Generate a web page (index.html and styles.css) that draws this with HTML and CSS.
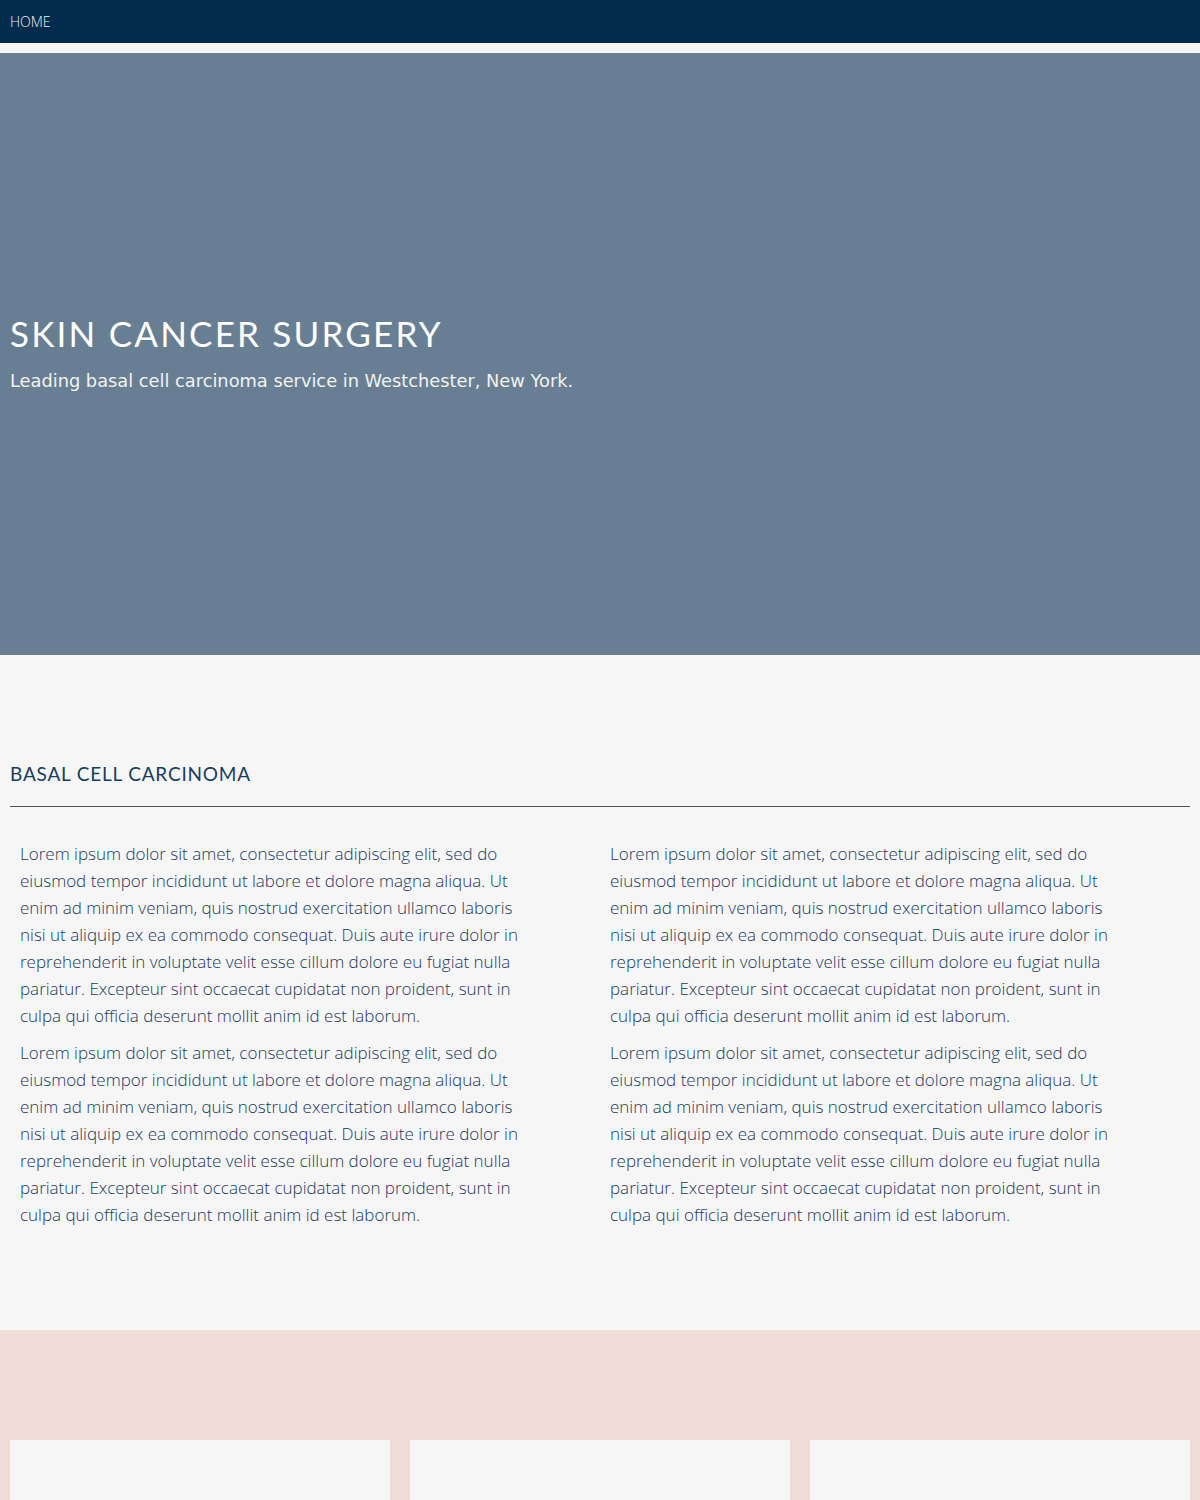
FILE: index.html
```html
<!DOCTYPE html>
<html>
<head>
<meta charset="utf-8">
<link rel="stylesheet" href="styles.css">
</head>
<body>
<nav class="nav"><a class="nav-link" href="#">HOME</a></nav>
<header class="hero">
  <h1 class="hero-title">SKIN CANCER SURGERY</h1>
  <p class="hero-sub">Leading basal cell carcinoma service in Westchester, New York.</p>
</header>
<section class="info">
  <h2 class="info-title">BASAL CELL CARCINOMA</h2>
  <div class="cols">
    <div class="col">
      <p>Lorem ipsum dolor sit amet, consectetur adipiscing elit, sed do eiusmod tempor incididunt ut labore et dolore magna aliqua. Ut enim ad minim veniam, quis nostrud exercitation ullamco laboris nisi ut aliquip ex ea commodo consequat. Duis aute irure dolor in reprehenderit in voluptate velit esse cillum dolore eu fugiat nulla pariatur. Excepteur sint occaecat cupidatat non proident, sunt in culpa qui officia deserunt mollit anim id est laborum.</p>
      <p>Lorem ipsum dolor sit amet, consectetur adipiscing elit, sed do eiusmod tempor incididunt ut labore et dolore magna aliqua. Ut enim ad minim veniam, quis nostrud exercitation ullamco laboris nisi ut aliquip ex ea commodo consequat. Duis aute irure dolor in reprehenderit in voluptate velit esse cillum dolore eu fugiat nulla pariatur. Excepteur sint occaecat cupidatat non proident, sunt in culpa qui officia deserunt mollit anim id est laborum.</p>
    </div>
    <div class="col">
      <p>Lorem ipsum dolor sit amet, consectetur adipiscing elit, sed do eiusmod tempor incididunt ut labore et dolore magna aliqua. Ut enim ad minim veniam, quis nostrud exercitation ullamco laboris nisi ut aliquip ex ea commodo consequat. Duis aute irure dolor in reprehenderit in voluptate velit esse cillum dolore eu fugiat nulla pariatur. Excepteur sint occaecat cupidatat non proident, sunt in culpa qui officia deserunt mollit anim id est laborum.</p>
      <p>Lorem ipsum dolor sit amet, consectetur adipiscing elit, sed do eiusmod tempor incididunt ut labore et dolore magna aliqua. Ut enim ad minim veniam, quis nostrud exercitation ullamco laboris nisi ut aliquip ex ea commodo consequat. Duis aute irure dolor in reprehenderit in voluptate velit esse cillum dolore eu fugiat nulla pariatur. Excepteur sint occaecat cupidatat non proident, sunt in culpa qui officia deserunt mollit anim id est laborum.</p>
    </div>
  </div>
</section>
<section class="cards">
  <div class="card"></div>
  <div class="card"></div>
  <div class="card"></div>
</section>
</body>
</html>
```
FILE: styles.css
```css
* { box-sizing: border-box; }
html, body { margin: 0; padding: 0; }
body {
  background: #f6f6f6;
  font-family: "Open Sans", "Liberation Sans", sans-serif;
}
.nav {
  height: 43px;
  background: #022b4c;
  display: flex;
  align-items: center;
  padding: 0 10px;
  margin-bottom: 10px;
}
.nav-link {
  color: #f0f0f0;
  text-decoration: none;
  font-size: 14px;
  font-weight: 300;
}
.hero {
  height: 602px;
  background: #687f93;
  display: flex;
  flex-direction: column;
  justify-content: center;
  padding: 0 10px 4px;
}
.hero-title {
  margin: 0;
  color: #fff;
  font-family: "Lato", "Liberation Sans", sans-serif;
  font-weight: 400;
  font-size: 35px;
  line-height: 44px;
  letter-spacing: 2.2px;
}
.hero-sub {
  margin: 14px 0 0;
  color: #f2f2f2;
  font-family: "DejaVu Sans", "Liberation Sans", sans-serif;
  font-size: 17.8px;
  line-height: 24px;
}
.info {
  padding: 106px 10px 92px;
}
.info-title {
  margin: 0;
  color: #17405f;
  font-family: "Lato", "Liberation Sans", sans-serif;
  font-weight: 400;
  font-size: 19px;
  line-height: 26px;
  letter-spacing: 0.8px;
  padding-bottom: 19px;
  border-bottom: 1px solid #555;
}
.cols {
  display: grid;
  grid-template-columns: 1fr 1fr;
  padding-top: 33px;
}
.col {
  padding-left: 10px;
}
.col p {
  margin: 0 0 10px;
  max-width: 520px;
  color: #1a3a5c;
  font-size: 17px;
  font-weight: 300;
  line-height: 27px;
}
.cards {
  background: #efddd8;
  padding: 110px 10px 0;
  display: grid;
  grid-template-columns: repeat(3, 1fr);
  gap: 20px;
  height: 300px;
}
.card {
  background: #f6f6f6;
  height: 200px;
}
```
